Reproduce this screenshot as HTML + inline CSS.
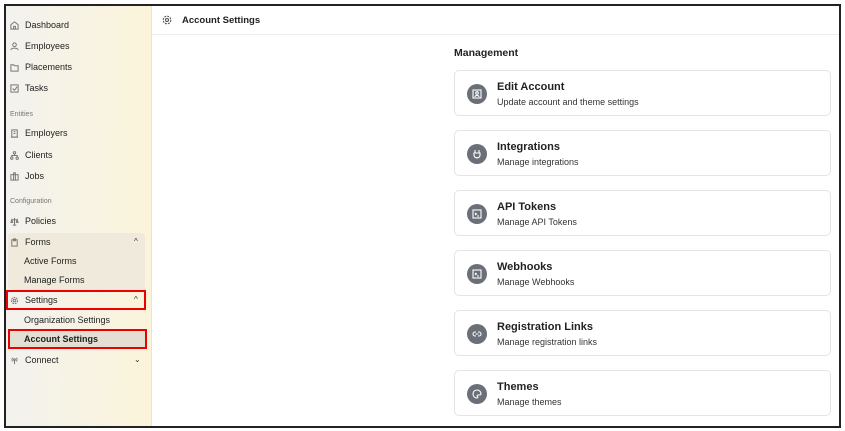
<!DOCTYPE html>
<html><head><meta charset="utf-8"><style>
*{box-sizing:border-box;margin:0;padding:0}
body{width:845px;height:431px;background:#fff;font-family:"Liberation Sans",sans-serif;position:relative;overflow:hidden}
.frame{position:absolute;left:4px;top:4px;width:837px;height:424px;border:2px solid #222}
.side{position:absolute;left:6px;top:6px;width:146px;height:420px;background:linear-gradient(90deg,#f3f2ee,#fbf4da);border-right:1px solid #f0e4b8}
.it{position:absolute;left:18px;font-size:9px;color:#222;display:flex;align-items:center;gap:6px}
.it svg{width:9px;height:9px;stroke:#777;fill:none;stroke-width:1.1}
.lab{position:absolute;left:18px;font-size:7px;color:#777}
.sub{position:absolute;left:24px;font-size:9px;color:#222}
.chev{position:absolute;left:134px;font-size:8px;color:#333}
.hdr{position:absolute;left:152px;top:6px;right:6px;height:29px;border-bottom:1px solid #eee;display:flex;align-items:center;padding-left:10px;gap:10px;font-size:9.5px;font-weight:bold;color:#222}
.mg{position:absolute;left:454px;top:47px;font-size:10.5px;font-weight:bold;color:#222}
.card{position:absolute;left:454px;width:377px;height:46px;border:1px solid #e4e4e4;border-radius:5px}
.ic{position:absolute;left:12px;top:13px;width:20px;height:20px;border-radius:50%;background:#6b6f78;display:flex;align-items:center;justify-content:center}
.ic svg{width:10px;height:10px;stroke:#fff;fill:none;stroke-width:1.1}
.t{position:absolute;left:42px;top:10px;font-size:11px;font-weight:bold;color:#222}
.s{position:absolute;left:42px;top:26px;font-size:9px;color:#333}
.red{position:absolute;border:2px solid #e00}
</style></head><body>
<div class="side">
<div style="position:absolute;left:2px;top:227px;width:137px;height:57px;background:#efeadb;border-radius:4px"></div>
<div style="position:absolute;left:2px;top:324px;width:138px;height:18px;background:#e3dfd2"></div>
</div>
<div class="it" style="top:20px;left:10px"><svg viewBox="0 0 10 10"><path d="M1 4L5 1l4 3v5H1z M4 9V6h2v3"/></svg>Dashboard</div>
<div class="it" style="top:41px;left:10px"><svg viewBox="0 0 10 10"><circle cx="5" cy="3" r="2"/><path d="M1 9c0-3 8-3 8 0"/></svg>Employees</div>
<div class="it" style="top:62px;left:10px"><svg viewBox="0 0 10 10"><path d="M1 2h3l1 1h4v6H1z"/></svg>Placements</div>
<div class="it" style="top:83px;left:10px"><svg viewBox="0 0 10 10"><rect x="1" y="1" width="8" height="8"/><path d="M3 5l2 2 3-4"/></svg>Tasks</div>
<div class="lab" style="top:111px;left:10px">Entities</div>
<div class="it" style="top:128px;left:10px"><svg viewBox="0 0 10 10"><rect x="2" y="1" width="6" height="8"/><path d="M1 9h8M4 3h2M4 5h2"/></svg>Employers</div>
<div class="it" style="top:150px;left:10px"><svg viewBox="0 0 10 10"><circle cx="5" cy="2" r="1.3"/><circle cx="2" cy="8" r="1.3"/><circle cx="8" cy="8" r="1.3"/><path d="M5 3v2M2 7V5h6v2"/></svg>Clients</div>
<div class="it" style="top:171px;left:10px"><svg viewBox="0 0 10 10"><rect x="1" y="3" width="8" height="6"/><path d="M4 3V1h2v2M4 3v6M6 3v6"/></svg>Jobs</div>
<div class="lab" style="top:198px;left:10px">Configuration</div>
<div class="it" style="top:216px;left:10px"><svg viewBox="0 0 10 10"><path d="M5 1v8M2 3h6M2 3l-1 3h2zM8 3l-1 3h2zM3 9h4"/></svg>Policies</div>
<div class="it" style="top:237px;left:10px"><svg viewBox="0 0 10 10"><rect x="2" y="2" width="6" height="7"/><path d="M4 1h2v2H4z"/></svg>Forms</div>
<div class="chev" style="top:237px">^</div>
<div class="sub" style="top:256px">Active Forms</div>
<div class="sub" style="top:275px">Manage Forms</div>
<div class="it" style="top:295px;left:10px"><svg viewBox="0 0 10 10"><circle cx="5" cy="5" r="1.5"/><circle cx="5" cy="5" r="3.5" stroke-dasharray="2 1"/></svg>Settings</div>
<div class="chev" style="top:295px">^</div>
<div class="sub" style="top:315px">Organization Settings</div>
<div class="sub" style="top:334px;font-weight:bold">Account Settings</div>
<div class="it" style="top:355px;left:10px"><svg viewBox="0 0 10 10"><circle cx="5" cy="4" r="1"/><path d="M5 5v4M3 2a3 3 0 000 4M7 2a3 3 0 010 4"/></svg>Connect</div>
<div class="chev" style="top:355px">⌄</div>
<div class="red" style="left:6px;top:290px;width:140px;height:20px"></div>
<div class="red" style="left:8px;top:329px;width:139px;height:20px"></div>
<div class="hdr"><svg width="10" height="10" viewBox="0 0 10 10" fill="none" stroke="#555" stroke-width="1.1"><circle cx="5" cy="5" r="1.5"/><circle cx="5" cy="5" r="3.8" stroke-dasharray="2 1"/></svg>Account Settings</div>
<div class="mg">Management</div>
<div class="card" style="top:70px"><div class="ic"><svg viewBox="0 0 10 10"><rect x="1" y="1" width="8" height="8"/><circle cx="5" cy="4" r="1.3"/><path d="M3 8c0-2 4-2 4 0"/></svg></div><div class="t">Edit Account</div><div class="s">Update account and theme settings</div></div>
<div class="card" style="top:130px"><div class="ic"><svg viewBox="0 0 10 10"><path d="M3 1v3M7 1v3M2 4h6v2a3 3 0 01-6 0zM5 9v-1"/></svg></div><div class="t">Integrations</div><div class="s">Manage integrations</div></div>
<div class="card" style="top:190px"><div class="ic"><svg viewBox="0 0 10 10"><rect x="1" y="1" width="8" height="8"/><path d="M3 4l1.5 1L3 6M5 7h2"/></svg></div><div class="t">API Tokens</div><div class="s">Manage API Tokens</div></div>
<div class="card" style="top:250px"><div class="ic"><svg viewBox="0 0 10 10"><rect x="1" y="1" width="8" height="8"/><path d="M3 4l1.5 1L3 6M5 7h2"/></svg></div><div class="t">Webhooks</div><div class="s">Manage Webhooks</div></div>
<div class="card" style="top:310px"><div class="ic"><svg viewBox="0 0 10 10"><path d="M4 3H3a2 2 0 000 4h1M6 3h1a2 2 0 010 4H6M3.5 5h3"/></svg></div><div class="t">Registration Links</div><div class="s">Manage registration links</div></div>
<div class="card" style="top:370px"><div class="ic"><svg viewBox="0 0 10 10"><path d="M5 1a4 4 0 000 8c1 0 1-1 .5-1.5S5 6 6 6h1.5A1.5 1.5 0 009 4.5 4 4 0 005 1z"/></svg></div><div class="t">Themes</div><div class="s">Manage themes</div></div>
<div class="frame"></div>
</body></html>
